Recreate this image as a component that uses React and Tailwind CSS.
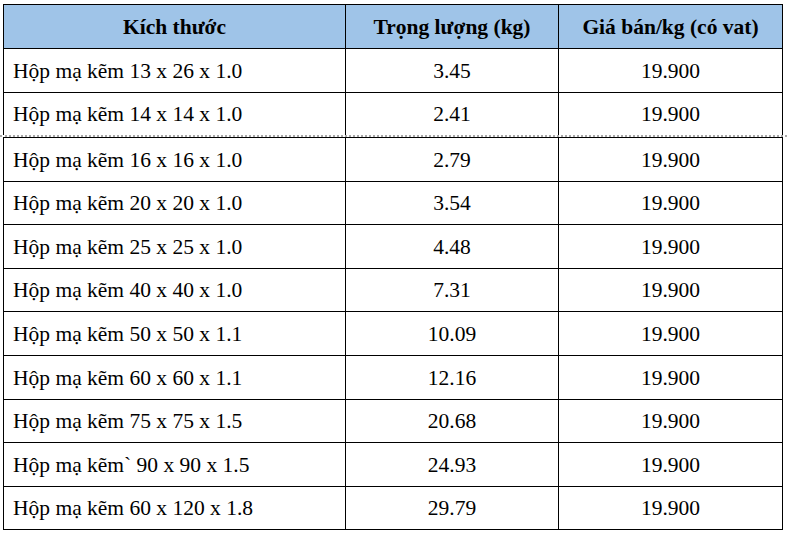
import React from "react";

const rows = [
  ["Hộp mạ kẽm 13 x 26 x 1.0", "3.45"],
  ["Hộp mạ kẽm 14 x 14 x 1.0", "2.41"],
  ["Hộp mạ kẽm 16 x 16 x 1.0", "2.79"],
  ["Hộp mạ kẽm 20 x 20 x 1.0", "3.54"],
  ["Hộp mạ kẽm 25 x 25 x 1.0", "4.48"],
  ["Hộp mạ kẽm 40 x 40 x 1.0", "7.31"],
  ["Hộp mạ kẽm 50 x 50 x 1.1", "10.09"],
  ["Hộp mạ kẽm 60 x 60 x 1.1", "12.16"],
  ["Hộp mạ kẽm 75 x 75 x 1.5", "20.68"],
  ["Hộp mạ kẽm` 90 x 90 x 1.5", "24.93"],
  ["Hộp mạ kẽm 60 x 120 x 1.8", "29.79"],
];

function Row({ r, h, last }) {
  const b = last ? "" : "border-b";
  return (
    <div className={`grid grid-cols-[342px_213px_224px] ${h}`}>
      <div className={`flex items-center pl-[9px] pt-[2px] border-r border-black ${b}`}>{r[0]}</div>
      <div className={`flex items-center justify-center pt-[2px] border-r border-black ${b}`}>{r[1]}</div>
      <div className={`flex items-center justify-center pt-[2px] border-r border-black ${b}`}>19.900</div>
    </div>
  );
}

export default function App() {
  return (
    <div
      className="w-[787px] h-[533px] bg-white pt-[4px] text-black text-[21.5px] leading-none"
      style={{ fontFamily: '"Liberation Serif", "Times New Roman", serif' }}
    >
      <div className="ml-[3px] w-[780px] border-l border-t border-black">
        <div className="grid grid-cols-[342px_213px_224px] h-[44px] bg-[#9fc4e8] font-bold">
          <div className="flex items-center justify-center pt-[2px] border-r border-b border-black">Kích thước</div>
          <div className="flex items-center justify-center pt-[2px] border-r border-b border-black">Trọng lượng (kg)</div>
          <div className="flex items-center justify-center pt-[2px] border-r border-b border-black">Giá bán/kg (có vat)</div>
        </div>
        <Row r={rows[0]} h="h-[44px]" />
        <Row r={rows[1]} h="h-[42px]" last />
      </div>
      <div className="w-full h-[2px] border-t-2 border-dotted border-[#a8a8a8]" />
      <div className="ml-[3px] w-[780px] border-l border-t border-black">
        {rows.slice(2).map((r, i) => (
          <Row key={i} r={r} h="h-[43.6px]" />
        ))}
      </div>
    </div>
  );
}
